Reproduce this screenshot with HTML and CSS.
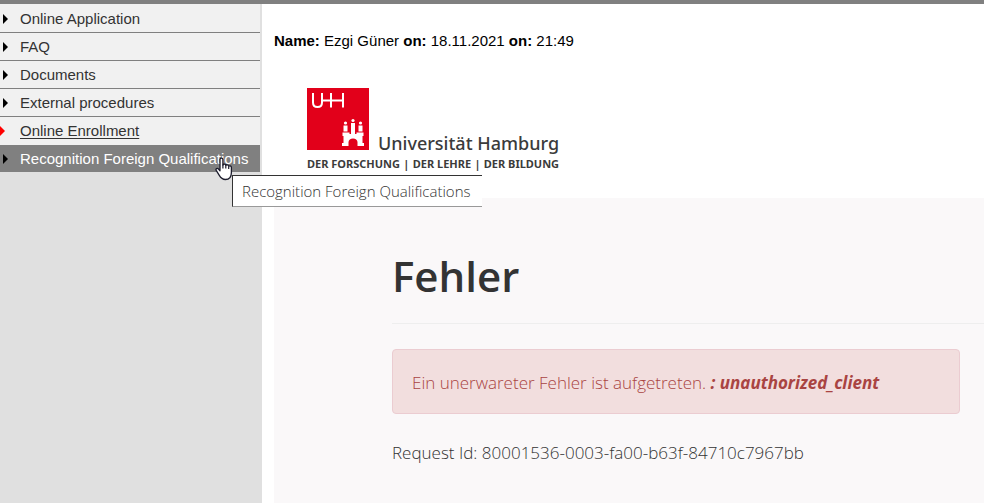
FILE: index.html
```
<!DOCTYPE html>
<html lang="en">
<head>
    <meta charset="UTF-8">
    <meta name="viewport" content="width=device-width, initial-scale=1.0">
    <title>Recognition Foreign Qualifications</title>
    <link rel="stylesheet" href="styles.css">
</head>
<body>

    <nav class="sidebar">
        <ul class="menu">
            <li><a href="#">Online Application</a></li>
            <li><a href="#">FAQ</a></li>
            <li><a href="#">Documents</a></li>
            <li><a href="#">External procedures</a></li>
            <li class="current"><a href="#">Online Enrollment</a></li>
            <li class="hover">
                <a href="#">Recognition Foreign Qualifications</a>
                <svg class="cursor" width="18" height="24" viewBox="0 0 18 24">
                    <path d="M5 2.5C5 .6 7.9 .6 7.9 2.5V8C8.2 6.6 10.7 6.8 10.8 8.4C11.4 7.3 13.5 7.6 13.7 9.2C14.5 8.4 16.4 8.9 16.4 10.6V15.5C16.4 19.5 14.5 22.5 10.4 22.5C6.8 22.5 5.8 21 4.3 18.4L1.2 13.4C.3 11.7 2.3 10.7 3.5 12L5 13.8Z" fill="#fff" stroke="#1c1c2c" stroke-width="1.3" stroke-linejoin="round"/>
                    <path d="M7.9 7.5V11.5M10.8 8.4V11.5M13.7 9.2V12" fill="none" stroke="#1c1c2c" stroke-width="1.2"/>
                </svg>
                <span class="tooltip" role="tooltip">Recognition Foreign Qualifications</span>
            </li>
        </ul>
    </nav>

    <main class="content">
        <p class="visitor"><b>Name:</b> Ezgi Güner <b>on:</b> 18.11.2021 <b>on:</b> 21:49</p>

        <div class="logo">
            <div class="logo-top">
                <svg class="logo-mark" width="62" height="62" viewBox="0 0 62 62">
                    <rect width="62" height="62" fill="#e2001a"/>
                    <path d="M6 5V14.5Q6 19 10.5 19Q15 19 15 14.5V5M24 5V19.5M36 5V19.5M15 12.5H36" fill="none" stroke="#fff" stroke-width="2"/>
                    <g fill="#fff">
                        <path d="M35 58V55H36.5V48H35.5V44.5H42.5V46H44V43H48V46H49.5V44.5H56.5V48H55.5V55H57V58H50.5V54Q50 50.5 46 50.5Q42 50.5 41.5 54V58Z"/>
                        <path d="M36.5 43.5V37.5H40.5V43.5ZM44 43V35H48V43ZM51.5 43.5V37.5H55.5V43.5Z"/>
                        <circle cx="38.5" cy="35" r="1.6"/>
                        <circle cx="46" cy="32.5" r="1.6"/>
                        <circle cx="53.5" cy="35" r="1.6"/>
                    </g>
                </svg>
                <span class="logo-name">Universität Hamburg</span>
            </div>
            <div class="logo-claim">
                <span>DER FORSCHUNG</span>
                <span>|</span>
                <span>DER LEHRE</span>
                <span>|</span>
                <span>DER BILDUNG</span>
            </div>
        </div>

        <section class="panel">
            <h1>Fehler</h1>
            <div class="alert" role="alert">
                Ein unerwareter Fehler ist aufgetreten. <strong><em>: unauthorized_client</em></strong>
            </div>
            <p class="request">Request Id: 80001536-0003-fa00-b63f-84710c7967bb</p>
        </section>
    </main>

</body>
</html>
```

FILE: styles.css
```
* {
    box-sizing: border-box;
}

body {
    margin: 0;
    min-height: 100vh;
    display: flex;
    border-top: 4px solid #808080;
    background: #fff;
    font-family: "Liberation Sans", Arial, sans-serif;
    font-size: 15px;
    color: #000;
}

/* left menu */
.sidebar {
    flex: 0 0 262px;
    background: #e0e0e0;
    border-right: 2px solid #e0e0e0;
}

.menu {
    margin: 0;
    padding: 1px 0 0;
    list-style: none;
    background: #f1f1f1;
}

.menu li {
    position: relative;
    border-bottom: 1px solid #808080;
}

.menu a {
    display: block;
    padding-left: 20px;
    line-height: 27px;
    color: #333;
    text-decoration: none;
    white-space: nowrap;
}

.menu li::before {
    content: "";
    position: absolute;
    top: 9px;
    left: 3px;
    border: 5px solid transparent;
    border-left-color: #000;
    border-right: 0;
}

.menu .current {
    border-bottom-color: #f1f1f1;
}

.menu .current a {
    text-decoration: underline;
    text-underline-offset: 2px;
}

.menu .current::before {
    left: 0;
    border-left-color: #f00;
}

.menu .hover {
    border-bottom: 0;
    background: #808080;
}

.menu .hover a {
    color: #fff;
}

.cursor {
    position: absolute;
    top: 12px;
    left: 215px;
    z-index: 2;
}

.tooltip {
    position: absolute;
    top: 30px;
    left: 232px;
    z-index: 1;
    padding: 0 12px 0 9px;
    border: 1px solid #333;
    border-right: 0;
    border-bottom-color: #999;
    background: #fff;
    color: #333;
    font-family: "Open Sans", sans-serif;
    font-size: 15px;
    font-weight: 300;
    line-height: 30px;
    white-space: nowrap;
}

/* right side */
.content {
    flex: 1;
    min-width: 0;
    padding-left: 12px;
    display: flex;
    flex-direction: column;
}

.visitor {
    margin: 28px 0 38px;
    line-height: 18px;
}

.logo {
    align-self: flex-start;
    margin: 0 0 26px 33px;
    color: #3b3b3b;
    font-family: "Noto Sans", sans-serif;
}

.logo-top {
    display: flex;
    align-items: flex-end;
    gap: 9px;
}

.logo-mark {
    display: block;
}

.logo-name {
    font-size: 18px;
    font-weight: 500;
    line-height: 14px;
}

.logo-claim {
    display: flex;
    justify-content: space-between;
    margin-top: 6px;
    font-size: 11px;
    font-weight: 700;
    line-height: 16px;
}

.panel {
    flex: 1;
    padding: 48px 0 32px 118px;
    background: #faf8f9;
    color: #333;
    font-family: "Open Sans", sans-serif;
    font-size: 17px;
    font-weight: 350;
}

.panel h1 {
    margin: 0 0 25px;
    padding-bottom: 17px;
    border-bottom: 1px solid #eee;
    font-size: 42px;
    font-weight: 600;
    line-height: 60px;
}

.alert {
    margin: 0 24px 26px 0;
    padding: 20px 19px 18px;
    border: 1px solid #ebccd1;
    border-radius: 4px;
    background: #f2dede;
    color: #a94442;
    line-height: 25px;
}

.request {
    margin: 0;
    line-height: 26px;
}
```
